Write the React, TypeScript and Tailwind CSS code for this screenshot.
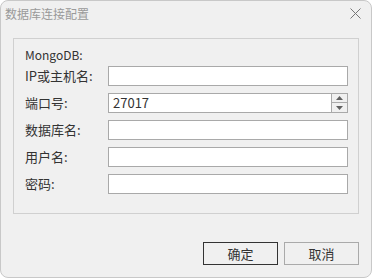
import React from "react";

const font = { fontFamily: '"Noto Sans CJK SC", "Noto Sans", sans-serif' };

function Field({ label, value, spinner }: { label: string; value?: string; spinner?: boolean }) {
  return (
    <div className="flex items-center h-[20px]">
      <div className="w-[83px] text-[13px] leading-[20px] text-[#333333]">{label}</div>
      <div className="relative w-[240px] h-[20px] border border-[#a9a9a9] bg-white flex items-center">
        <span className="pl-[4px] text-[13px] leading-[18px] text-[#333333]">{value}</span>
        {spinner && (
          <div className="absolute right-[-1px] top-[-1px] w-[17px] h-[20px] flex flex-col">
            <div className="h-[10px] border border-[#a9a9a9] bg-[#f0f0f0] flex items-center justify-center">
              <svg width="7" height="4" viewBox="0 0 7 4"><polygon points="0,4 7,4 3.5,0" fill="#606060" /></svg>
            </div>
            <div className="h-[10px] border border-t-0 border-[#a9a9a9] bg-[#f0f0f0] flex items-center justify-center">
              <svg width="7" height="4" viewBox="0 0 7 4"><polygon points="0,0 7,0 3.5,4" fill="#606060" /></svg>
            </div>
          </div>
        )}
      </div>
    </div>
  );
}

export default function App() {
  return (
    <div className="w-[372px] h-[278px] bg-white" style={font}>
      <div className="w-full h-full rounded-[8px] border border-[#c8c8c8] bg-[#f0f0f0] flex flex-col">
        <div className="h-[25px] flex items-center justify-between pl-[4px] pr-[10px]">
          <span className="text-[12px] leading-[16px] text-[#999999]">数据库连接配置</span>
          <svg width="11" height="11" viewBox="0 0 11 11">
            <path d="M0.5 0.5 L10.5 10.5 M10.5 0.5 L0.5 10.5" stroke="#777777" strokeWidth="1" />
          </svg>
        </div>
        <div className="mt-[12px] ml-[12px] w-[346px] h-[176px] border border-[#d0d0d0] flex flex-col pl-[11px] pt-[6px]">
          <div className="h-[20px] text-[12px] leading-[20px] text-[#333333]">MongoDB:</div>
          <div className="mt-[1px] flex flex-col gap-[7px]">
            <Field label="IP或主机名:" />
            <Field label="端口号:" value="27017" spinner />
            <Field label="数据库名:" />
            <Field label="用户名:" />
            <Field label="密码:" />
          </div>
        </div>
        <div className="mt-[28px] flex justify-end gap-[6px] pr-[12px]">
          <button className="w-[75px] h-[23px] border border-[#333333] bg-[#f0f0f0] text-[13px] text-[#333333] leading-[21px]">确定</button>
          <button className="w-[75px] h-[23px] border border-[#aaaaaa] bg-[#f0f0f0] text-[13px] text-[#333333] leading-[21px]">取消</button>
        </div>
      </div>
    </div>
  );
}
